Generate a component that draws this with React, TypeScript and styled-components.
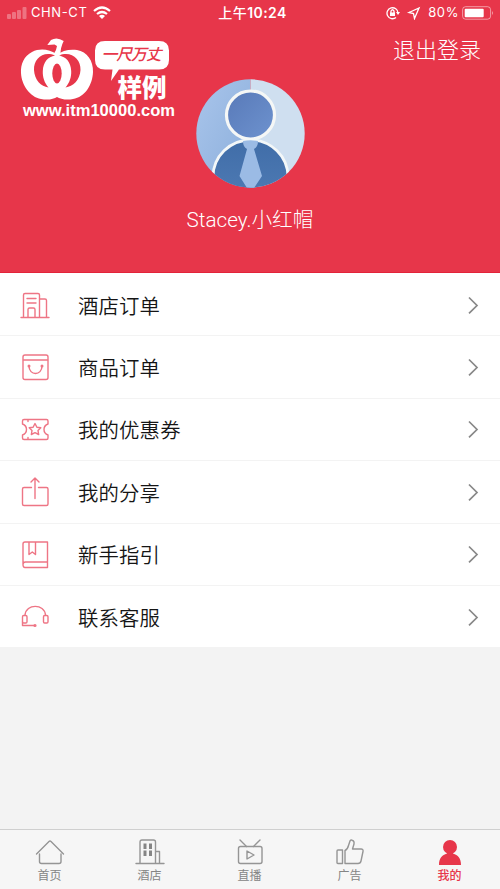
import React from 'react';
import styled, { createGlobalStyle } from 'styled-components';

const GlobalStyle = createGlobalStyle`
  * { box-sizing: border-box; }
  body { margin: 0; background: #f3f3f3; }
`;

const cjk = '"Noto Sans CJK SC", sans-serif';

const Screen = styled.div`
  display: flex;
  flex-direction: column;
  width: 500px;
  height: 889px;
  background: #f3f3f3;
  font-family: ${cjk};
  overflow: hidden;
`;

const Header = styled.header`
  height: 273px;
  flex: none;
  background: #e7364a;
  border-bottom: 1px solid #e32339;
  color: #fff;
`;

const StatusBar = styled.div`
  display: grid;
  grid-template-columns: 1fr auto 1fr;
  align-items: center;
  height: 25px;
  padding: 0 6px 0 7px;
  font: 400 13px/25px Inter, ${cjk};
`;

const StatusGroup = styled.div<{ $end?: boolean }>`
  display: flex;
  align-items: center;
  justify-content: ${(p) => (p.$end ? 'flex-end' : 'flex-start')};
  height: 25px;
  svg { display: block; flex: none; }
`;

const Carrier = styled.span`
  margin: 0 6px 0 4px;
  letter-spacing: 0.6px;
`;

const Clock = styled.span`
  font-weight: 600;
  font-size: 14px;
  letter-spacing: 0.4px;
  margin-left: 4px;
  span { font-weight: 500; }
`;

const Percent = styled.span`
  margin: 0 3px 0 7px;
  letter-spacing: 0.6px;
`;

const Profile = styled.div`
  display: grid;
  grid-template-columns: 1fr auto 1fr;
  padding: 12px 20px 0 20px;
`;

const Identity = styled.div`
  display: flex;
  flex-direction: column;
  align-items: center;
  width: 130px;
  padding-top: 41.5px;
  svg { display: block; }
`;

const Name = styled.div`
  margin-top: 16px;
  font: 300 20.7px/32px Roboto, ${cjk};
  white-space: nowrap;
`;

const Logout = styled.button`
  justify-self: end;
  align-self: start;
  margin: -2px -1px 0 0;
  border: 0;
  padding: 0;
  background: none;
  color: #fff;
  font: 300 22px/26px ${cjk};
`;

const Menu = styled.nav`
  display: grid;
  grid-template-rows: repeat(6, 62.4px);
  padding-top: 1px;
  background: #fff;
  height: 374px;
  flex: none;
  overflow: hidden;
`;

const MenuRow = styled.a`
  display: grid;
  grid-template-columns: 30px 1fr 12px;
  column-gap: 28px;
  align-items: center;
  padding: 0 21px 0 20px;
  border-bottom: 1.5px solid #f3f3f3;
  color: #151515;
  font: 350 20.4px/30px ${cjk};
  letter-spacing: 0.15px;
  &:last-child { border-bottom: 0; }
`;

const LineIcon = styled.svg`
  display: block;
  width: 30px;
  height: 32px;
  fill: none;
  stroke: #ee7585;
  stroke-width: 1.4;
  stroke-linejoin: round;
  stroke-linecap: round;
`;

const Chevron = styled.svg`
  display: block;
  width: 12px;
  height: 18px;
  fill: none;
  stroke: #888;
  stroke-width: 1.7;
`;

const TabBar = styled.nav`
  display: grid;
  grid-template-columns: repeat(5, 1fr);
  height: 60px;
  margin-top: auto;
  background: #f6f6f6;
  border-top: 1px solid #cfcfcf;
`;

const Tab = styled.a<{ $active?: boolean }>`
  display: flex;
  flex-direction: column;
  align-items: center;
  padding: 8px 1px 0 0;
  color: ${(p) => (p.$active ? '#e7364a' : '#858585')};
  font: ${(p) => (p.$active ? 500 : 400)} 12px/17px ${cjk};
`;

const TabIcon = styled.svg`
  display: block;
  width: 30px;
  height: 28px;
  fill: none;
  stroke: #959595;
  stroke-width: 1.4;
  stroke-linecap: round;
  stroke-linejoin: round;
`;

const Logo = () => (
  <svg width="158" height="84" viewBox="20 37 158 84" fill="#fff">
    <path d="M57 54.5 C49 49 40 48 32 52 C24 56 20.500 64 21 73 C21.500 85 30 97 41 99 C48 100.500 54 99 57 97 C60 99 67 100.500 73 99 C85 97 92.500 85 93 72 C93.500 61 87 51.500 77 50 C69 48.800 62 51 57 54.500Z" />
    <g fill="#e7364a">
      <path d="M55 55.500 C43 50.500 33.500 59 34 70 C34.500 80 41 86.500 48.500 87.500 C44.500 83 42.500 77 42.800 71 C43.200 62 48 56.800 55 55.500Z" />
      <path d="M59 55.500 C71 50.500 81 59 80.500 70 C80 80 73 86.500 65.500 87.500 C69.500 83 71.500 77 71.200 71 C70.800 62 66 56.800 59 55.500Z" />
      <ellipse cx="57" cy="73.500" rx="4.700" ry="10" />
    </g>
    <path d="M47.300 45 L51 40 Q57 36.500 63.700 41 Q60.500 47 60.300 55.500 L53.500 54.500 Q56.500 50.500 57 46 L54.500 44.500Z" />
    <path d="M105 41 H159 Q169 41 169 50.500 V60 Q169 69.500 159 69.500 H119 L111 81 L112.500 69.500 H105 Q95 69.500 95 60 V50.500 Q95 41 105 41Z" />
    <text transform="translate(101.500 59.500) skewX(-14)" fill="#e7364a" fontFamily='"Noto Sans CJK SC", sans-serif' fontWeight="500" fontSize="15.800" textLength="60">一尺万丈</text>
    <text x="117.500" y="96.500" fontFamily='"Noto Sans CJK SC", sans-serif' fontWeight="900" fontSize="24.500" textLength="49">样例</text>
    <text x="23" y="116" fontFamily='"Liberation Sans", sans-serif' fontWeight="700" fontSize="16" textLength="152" lengthAdjust="spacingAndGlyphs">www.itm10000.com</text>
  </svg>
);

const Avatar = () => (
  <svg width="109" height="109" viewBox="0 0 109 109">
    <defs>
      <clipPath id="disc"><circle cx="54.500" cy="54.500" r="54.200" /></clipPath>
      <linearGradient id="left" x2="1" y2="1"><stop stopColor="#a9c5eb" /><stop offset="1" stopColor="#8baedb" /></linearGradient>
      <linearGradient id="head" x2="1" y2="1"><stop stopColor="#5879b8" /><stop offset="1" stopColor="#6e93cf" /></linearGradient>
      <linearGradient id="suit" x2="0" y2="1"><stop stopColor="#406da8" /><stop offset="1" stopColor="#527eb7" /></linearGradient>
    </defs>
    <g clipPath="url(#disc)">
      <path fill="url(#left)" d="M0 0H54.500V109H0Z" />
      <path fill="#cfdff0" d="M54.500 0H109V109H54.500Z" />
      <ellipse cx="54.500" cy="98" rx="37.500" ry="37" fill="url(#suit)" stroke="#f3f7f8" strokeWidth="2.800" />
      <circle cx="54.500" cy="36" r="24" fill="url(#head)" stroke="#f5f7f6" strokeWidth="3.200" />
      <path fill="#9bbbe5" d="M47 62 Q54.500 60.500 62 62 Q62 68 58 70 L66 97 L58 109 H51 L43.500 97 L51 70 Q47 68 47 62Z" />
    </g>
  </svg>
);

const menu = [
  { label: '酒店订单', icon: <><path d="M1 28.500H29M3.500 28V6Q3.500 4.500 5 4.500H18Q19.500 4.500 19.500 6V28M19.500 10H25Q26.500 10 26.500 11.500V28M8 28V20.500Q8 19 9.500 19H13.500Q15 19 15 20.500V28M7 9.500H16M7 14H16" /></> },
  { label: '商品订单', icon: <><rect x="3" y="4" width="25" height="24.500" rx="2" /><path d="M3.500 9H27.500M9 15C9 25 22 25 22 15" /><circle cx="9" cy="15" r=".8" /><circle cx="22" cy="15" r=".8" /></> },
  { label: '我的优惠券', icon: <><path d="M4 6.500H26.500Q28 6.500 28 8V11Q24 12.500 24 16.500T28 22V25Q28 26.500 26.500 26.500H4Q2.500 26.500 2.500 25V22Q6.500 20.500 6.500 16.500T2.500 11V8Q2.500 6.500 4 6.500M8 7V8.500M8 24.500V26" /><path d="M15 10.500L16.900 14.200L20.800 14.800L18 17.600L18.700 21.500L15 19.700L11.300 21.500L12 17.600L9.200 14.800L13.100 14.200Z" /></> },
  { label: '我的分享', icon: <path d="M11.500 11.500H4Q2.500 11.500 2.500 13V28Q2.500 29.500 4 29.500H26.500Q28 29.500 28 28V13Q28 11.500 26.500 11.500H18.500M15 22.500V2M11 6L15 2L19 6" /> },
  { label: '新手指引', icon: <path d="M3 26V6Q3 4 5 4H27.500V29.500H5Q3 29.500 3 26.500Q3 24 5.500 24H27.500M9 4V16.500L12.300 14L15.500 16.500V4" /> },
  { label: '联系客服', icon: <><rect x="2.500" y="14.500" width="4.500" height="7.500" rx="1.200" /><rect x="23.500" y="14.500" width="4.500" height="7.500" rx="1.200" /><path d="M5 14C6 2.500 24.500 2.500 25.500 14M2.500 21V24.500H15" /><circle cx="15" cy="24.500" r=".9" /></> },
];

const tabs = [
  { label: '首页', icon: <path d="M1.500 16L14 3.500Q15 2.500 16 3.500L28.500 16M4.500 16V23.500Q4.500 25.500 6.500 25.500H24Q26 25.500 26 23.500V16" /> },
  { label: '酒店', icon: <><path d="M1 25.500H29M5 25V4.500Q5 2 7 2H18.500Q20.500 2 20.500 4V25M20.500 13.500H24.500V25" /><path fill="#858585" stroke="none" d="M8.500 5.500H11.500V11H8.500ZM14 5.500H17V11H14ZM8.500 12.500H11.500V18H8.500ZM14 12.500H17V18H14Z" /></> },
  { label: '直播', icon: <><rect x="3.500" y="8.500" width="23.500" height="17" rx="2" /><path d="M5 2L11.500 8.500M25 2L18.500 8.500M12 13L19 17L12 21Z" /></> },
  { label: '广告', icon: <path d="M3 12H7.500V25.500H3Q2 25.500 2 24.500V13Q2 12 3 12ZM10 25.500V12.500Q12.500 11.500 13.500 7.500L15 3Q16 1.500 17.500 2.500Q19.500 3 19 6L17.500 11H26Q28.500 11 28 13.500L26 23Q25.500 25.500 23 25.500Z" /> },
  { label: '我的', active: true, icon: <g fill="#e7364a" stroke="none"><circle cx="15" cy="9" r="7" /><path d="M12 14H18V15.500C23 17 26 20 26 27H4C4 20 7 17 12 15.500Z" /></g> },
];

export default function App() {
  return (
    <Screen>
      <GlobalStyle />
      <Header>
        <StatusBar>
          <StatusGroup>
            <svg width="20" height="14" viewBox="0 0 20 14" fill="#fff" opacity=".3"><rect x="0" y="8" width="4" height="5" rx="1" /><rect x="5" y="6" width="4" height="7" rx="1" /><rect x="10" y="4" width="4" height="9" rx="1" /><rect x="15.500" y="1" width="4" height="12" rx="1" /></svg>
            <Carrier>CHN-CT</Carrier>
            <svg width="18" height="13" viewBox="0 0 18 13" fill="none" stroke="#fff" strokeWidth="2.200"><path d="M1 5Q9 -2 17 5M4 8Q9 4 14 8" /><path fill="#fff" stroke="none" d="M6 10Q9 7.500 12 10L9 13Z" /></svg>
          </StatusGroup>
          <Clock><span>上午</span>10:24</Clock>
          <StatusGroup $end>
            <svg width="35" height="14" viewBox="0 0 35 14" fill="none" stroke="#fff" strokeWidth="1.300"><path d="M10 11.500A5.500 5.500 0 1 1 12 7" /><path fill="#fff" stroke="none" d="M10 6H14L12 9ZM4 6.500H9V10H4Z" /><path d="M5 7V5Q6.500 2.500 8 5V7M23 6.500L33 2L28.500 12.500L27.500 7.500Z" /></svg>
            <Percent>80%</Percent>
            <svg width="32" height="14" viewBox="0 0 32 14" fill="#fff"><rect x=".6" y=".7" width="28" height="12.500" rx="3" fill="none" stroke="#fff" opacity=".5" /><rect x="2.700" y="2.700" width="19" height="8.600" rx="1" /><path opacity=".5" d="M30 5Q32 7 30 9Z" /></svg>
          </StatusGroup>
        </StatusBar>
        <Profile>
          <Logo />
          <Identity><Avatar /><Name>Stacey.小红帽</Name></Identity>
          <Logout>退出登录</Logout>
        </Profile>
      </Header>
      <Menu>
        {menu.map((m) => (
          <MenuRow key={m.label}>
            <LineIcon viewBox="0 0 30 32">{m.icon}</LineIcon>
            <span>{m.label}</span>
            <Chevron viewBox="0 0 12 18"><path d="M2 1.500L10 9.500L2 17.300" /></Chevron>
          </MenuRow>
        ))}
      </Menu>
      <TabBar>
        {tabs.map((t) => (
          <Tab key={t.label} $active={t.active}>
            <TabIcon viewBox="0 0 30 28">{t.icon}</TabIcon>
            {t.label}
          </Tab>
        ))}
      </TabBar>
    </Screen>
  );
}
